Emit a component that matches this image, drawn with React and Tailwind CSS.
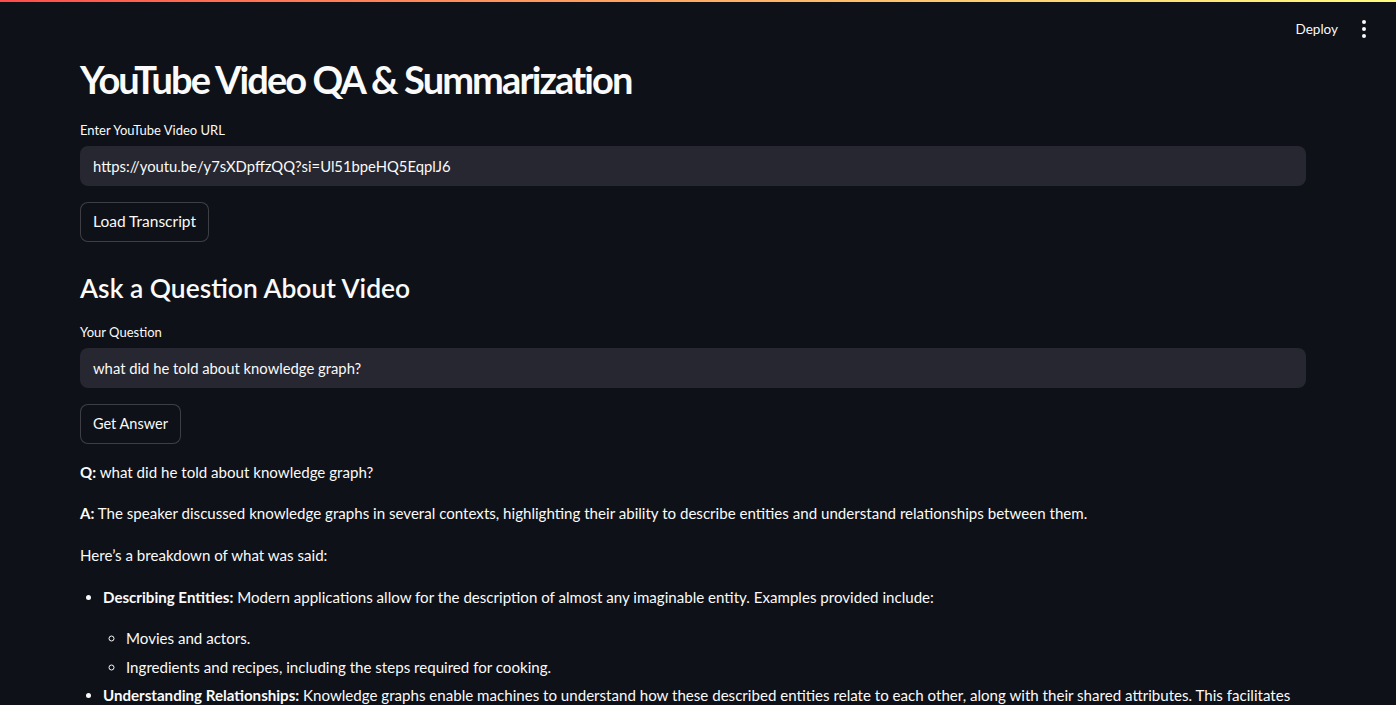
export default function App() {
  const font = { fontFamily: "Lato, 'Noto Sans', sans-serif" };
  return (
    <div className="min-h-[705px] h-[705px] overflow-hidden bg-[#0e1117] text-[#fafafa] relative" style={font}>
      <div className="h-[2px] bg-gradient-to-r from-[#ff4b4b] to-[#fffd80]" />
      <div className="flex justify-end items-center h-[54px] pr-[22px] gap-[16px] text-[13.5px]">
        <span className="text-[#fafafa]">Deploy</span>
        <div className="flex flex-col gap-[3px] items-center px-[8px]">
          <div className="w-[4px] h-[4px] rounded-full bg-[#fafafa]" />
          <div className="w-[4px] h-[4px] rounded-full bg-[#fafafa]" />
          <div className="w-[4px] h-[4px] rounded-full bg-[#fafafa]" />
        </div>
      </div>
      <div className="pl-[80px] pr-[90px] flex flex-col">
        <h1 className="text-[38px] font-bold leading-[44px] mt-[1px] mb-[21px] tracking-[-1.9px]">YouTube Video QA &amp; Summarization</h1>
        <label className="text-[13px] leading-[16px] mb-[8px]">Enter YouTube Video URL</label>
        <div className="h-[40px] rounded-[8px] bg-[#262730] flex items-center px-[13px] text-[14.8px]">https://youtu.be/y7sXDpffzQQ?si=Ul51bpeHQ5EqplJ6</div>
        <div className="mt-[16px]">
          <button className="h-[40px] px-[12px] rounded-[8px] border border-[rgba(250,250,250,0.2)] bg-[#0e1117] text-[15.5px]">Load Transcript</button>
        </div>
        <h2 className="text-[26.4px] font-semibold leading-[36px] mt-[28px] mb-[18px]">Ask a Question About Video</h2>
        <label className="text-[13px] leading-[16px] mb-[8px]">Your Question</label>
        <div className="h-[40px] rounded-[8px] bg-[#262730] flex items-center px-[13px] text-[14.8px]">what did he told about knowledge graph?</div>
        <div className="mt-[16px]">
          <button className="h-[40px] px-[12px] rounded-[8px] border border-[rgba(250,250,250,0.2)] bg-[#0e1117] text-[14.5px]">Get Answer</button>
        </div>
        <div className="text-[15.1px] leading-[25px] mt-[16px]">
          <p className="mb-[16px]"><b>Q:</b> what did he told about knowledge graph?</p>
          <p className="mb-[17px]"><b>A:</b> The speaker discussed knowledge graphs in several contexts, highlighting their ability to describe entities and understand relationships between them.</p>
          <p className="mb-[17px]">Here’s a breakdown of what was said:</p>
          <ul className="list-disc pl-[23px]">
            <li className="mb-[3px]">
              <p className="mb-[16px]"><b>Describing Entities:</b> Modern applications allow for the description of almost any imaginable entity. Examples provided include:</p>
              <ul className="pl-[23px]" style={{ listStyleType: "circle" }}>
                <li className="mb-[4px]">Movies and actors.</li>
                <li className="mb-[3px]">Ingredients and recipes, including the steps required for cooking.</li>
              </ul>
            </li>
            <li><b>Understanding Relationships:</b> Knowledge graphs enable machines to understand how these described entities relate to each other, along with their shared attributes. This facilitates</li>
          </ul>
        </div>
      </div>
    </div>
  );
}
